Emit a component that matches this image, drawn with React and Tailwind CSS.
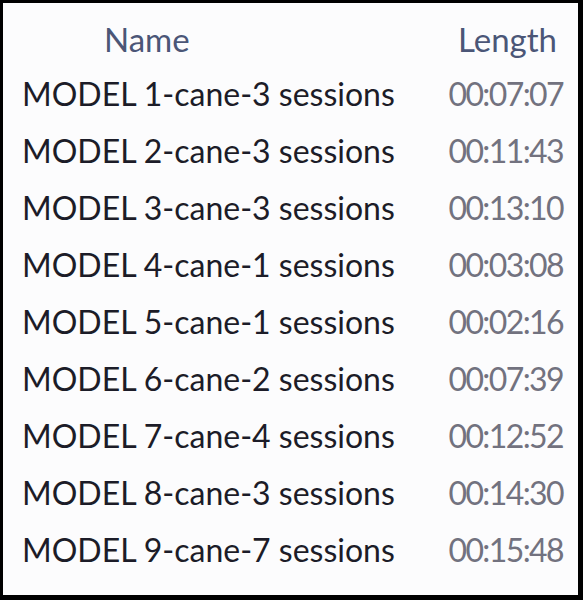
import React from 'react';

const rows = [
  ['MODEL 1-cane-3 sessions', '00:07:07'],
  ['MODEL 2-cane-3 sessions', '00:11:43'],
  ['MODEL 3-cane-3 sessions', '00:13:10'],
  ['MODEL 4-cane-1 sessions', '00:03:08'],
  ['MODEL 5-cane-1 sessions', '00:02:16'],
  ['MODEL 6-cane-2 sessions', '00:07:39'],
  ['MODEL 7-cane-4 sessions', '00:12:52'],
  ['MODEL 8-cane-3 sessions', '00:14:30'],
  ['MODEL 9-cane-7 sessions', '00:15:48'],
];

export default function App() {
  return (
    <div
      className="w-[583px] h-[600px] bg-black pt-[3px] pl-[3px] pr-[5px] pb-[5px]"
      style={{ fontFamily: 'Lato, "Liberation Sans", sans-serif' }}
    >
      <div className="h-full bg-[#fcfcfd] flex flex-col">
        <div className="h-[62px] flex items-end pb-[1px] text-[33px] text-[#4b5677]">
          <span className="pl-[101px] w-[455px]">Name</span>
          <span>Length</span>
        </div>
        {rows.map(([name, len]) => (
          <div key={name} className="h-[57px] flex items-center pl-[19px] pr-[15px] text-[32px]">
            <span className="flex-1 text-[#1c1c28]">{name}</span>
            <span className="text-[#72727f] tracking-[-1.6px]">{len}</span>
          </div>
        ))}
      </div>
    </div>
  );
}
